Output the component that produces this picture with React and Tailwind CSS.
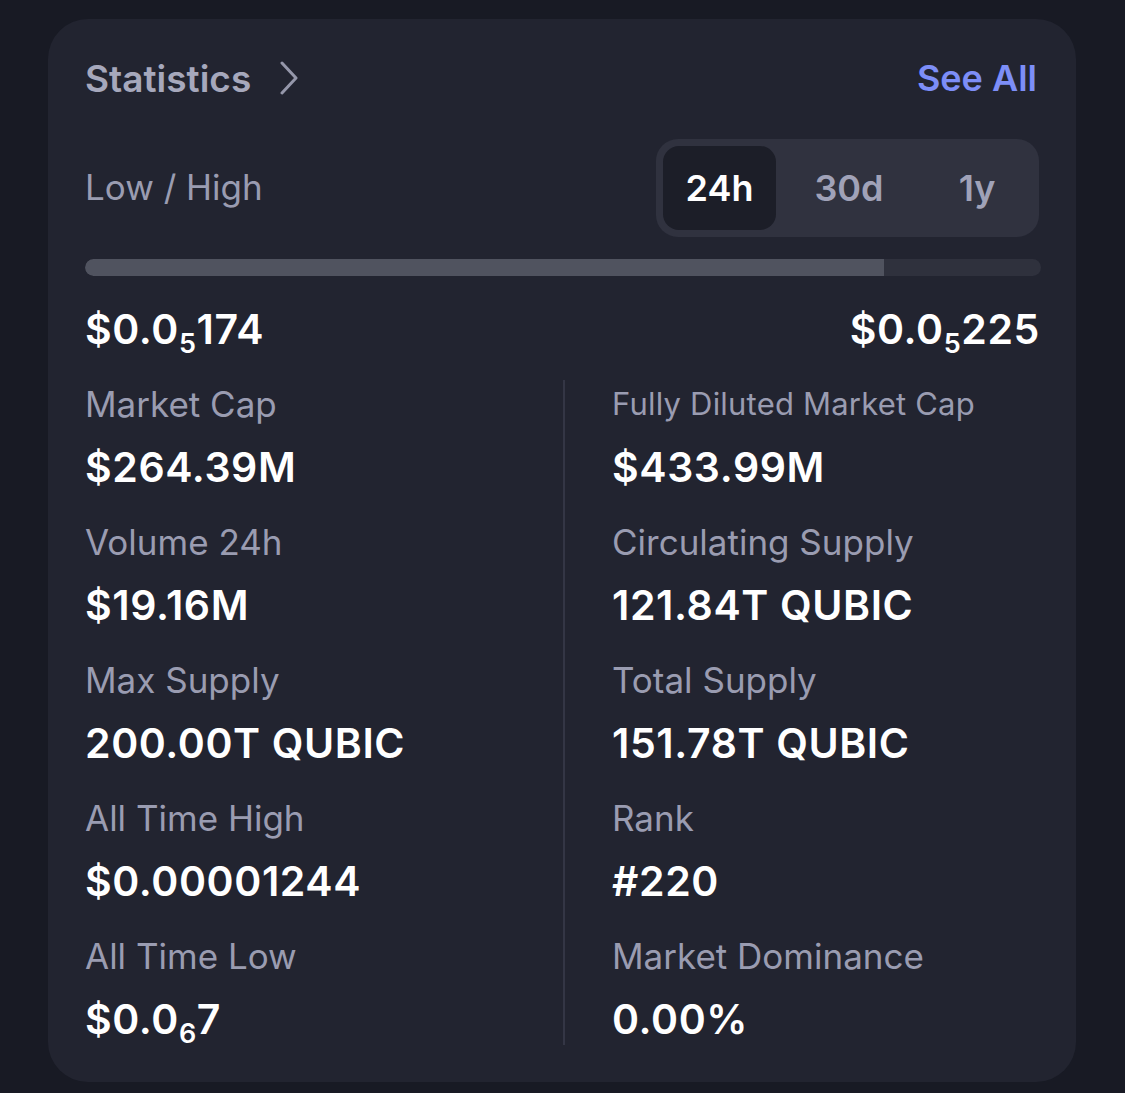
import React from 'react';

const Sub = ({ pre, sub, post }) => (
  <span>
    {pre}
    <span className="text-[27px] relative top-[9px] leading-none">{sub}</span>
    {post}
  </span>
);

const Stat = ({ label, value, small }) => (
  <div className="h-[138px] flex flex-col">
    <div className={`h-[40px] leading-[40px] text-[#9a9cb1] whitespace-nowrap ${small ? 'text-[31px] tracking-[0.2px]' : 'text-[35px]'}`}>{label}</div>
    <div className="h-[46px] leading-[46px] mt-[20px] text-[41px] font-semibold text-white tracking-[0.6px] whitespace-nowrap">{value}</div>
  </div>
);

const left = [
  { label: 'Market Cap', value: '$264.39M' },
  { label: 'Volume 24h', value: '$19.16M' },
  { label: 'Max Supply', value: '200.00T QUBIC' },
  { label: 'All Time High', value: '$0.00001244' },
  { label: 'All Time Low', value: <Sub pre="$0.0" sub="6" post="7" /> },
];

const right = [
  { label: 'Fully Diluted Market Cap', value: '$433.99M', small: true },
  { label: 'Circulating Supply', value: '121.84T QUBIC' },
  { label: 'Total Supply', value: '151.78T QUBIC' },
  { label: 'Rank', value: '#220' },
  { label: 'Market Dominance', value: '0.00%' },
];

export default function App() {
  return (
    <div className="w-[1125px] h-[1093px] bg-[#181a24] pt-[19px] pl-[48px]" style={{ fontFamily: 'Inter, "Noto Sans", sans-serif' }}>
      <div className="w-[1028px] h-[1063px] bg-[#222430] rounded-[40px] pt-[39px] px-[37px]">
        {/* header */}
        <div className="flex items-center justify-between h-[40px]">
          <div className="flex items-center gap-[28px]">
            <span className="text-[37px] font-semibold text-[#a6a8bc] leading-none">Statistics</span>
            <svg width="20" height="34" viewBox="0 0 20 34" fill="none">
              <path d="M3 2 L17 17 L3 32" stroke="#9597aa" strokeWidth="3" strokeLinecap="round" strokeLinejoin="round" />
            </svg>
          </div>
          <span className="text-[36px] font-semibold text-[#7d8ef7] leading-none mr-[2px]">See All</span>
        </div>

        {/* low/high + tabs */}
        <div className="flex items-center justify-between mt-[41px]">
          <span className="text-[35px] text-[#9a9cb1] leading-none -mt-[2px]">Low / High</span>
          <div className="w-[383px] h-[98px] bg-[#30323f] rounded-[22px] p-[7px] flex items-center">
            <div className="w-[113px] h-full bg-[#1c1e28] rounded-[16px] flex items-center justify-center text-[36px] font-semibold text-white">24h</div>
            <div className="w-[146px] h-full flex items-center justify-center text-[36px] font-semibold text-[#a0a2b8]">30d</div>
            <div className="flex-1 h-full flex items-center justify-center text-[36px] font-semibold text-[#a0a2b8]">1y</div>
          </div>
        </div>

        {/* range bar */}
        <div className="mt-[22px] h-[17px] w-[956px] rounded-full bg-[#2f313d] overflow-hidden">
          <div className="h-full bg-[#50535f] rounded-l-full" style={{ width: '83.6%' }} />
        </div>

        <div className="flex justify-between mt-[30px] h-[46px] leading-[46px] text-[41px] font-semibold text-white tracking-[0.6px] w-[955px]">
          <Sub pre="$0.0" sub="5" post="174" />
          <Sub pre="$0.0" sub="5" post="225" />
        </div>

        {/* stats grid */}
        <div className="flex mt-[28px]">
          <div className="w-[478px] pt-[4px]">
            {left.map((s) => (
              <Stat key={s.label} {...s} />
            ))}
          </div>
          <div className="w-[2px] h-[665px] bg-[#343645]" />
          <div className="flex-1 pl-[47px] pt-[4px]">
            {right.map((s) => (
              <Stat key={s.label} {...s} />
            ))}
          </div>
        </div>
      </div>
    </div>
  );
}
